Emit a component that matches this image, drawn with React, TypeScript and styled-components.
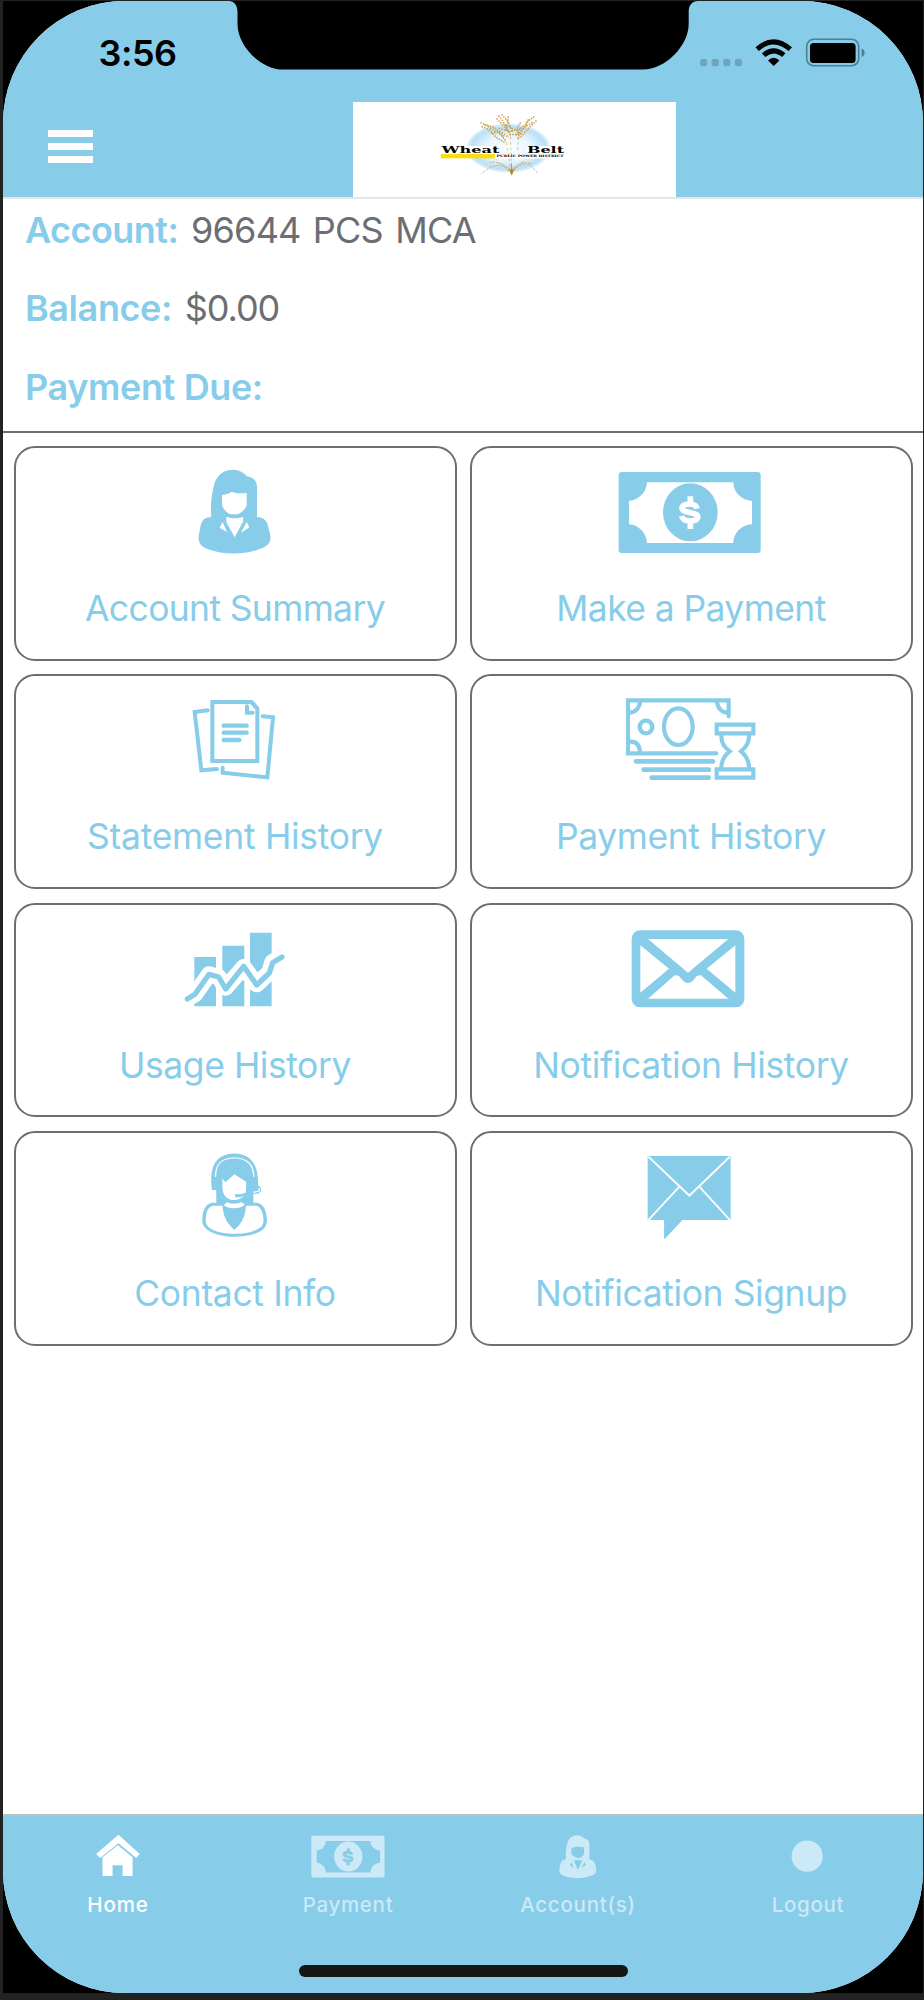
import React from "react";
import styled, { createGlobalStyle } from "styled-components";

const SKY = "#87cdea";
const GREY = "#6b6e73";

const Global = createGlobalStyle`
  html, body { margin: 0; background: #222; }
  body { font-family: Inter, "Liberation Sans", sans-serif; }
  * { box-sizing: border-box; }
  svg { display: block; }
`;

const Bezel = styled.div`
  width: 924px;
  height: 2000px;
  padding: 1px 1px 7px 3px;
  background: #222;
`;

const Corners = styled.div`
  height: 1992px;
  background: #000;
`;

const Screen = styled.div`
  position: relative;
  display: flex;
  flex-direction: column;
  height: 1992px;
  border-radius: 122px;
  overflow: hidden;
  background: #fff;
`;

const NotchShape = styled.svg`
  position: absolute;
  top: 0;
  left: 222px;
`;

const Header = styled.header`
  height: 197.5px;
  background: ${SKY};
  border-bottom: 2px solid #e3e5e6;
`;

const StatusBar = styled.div`
  display: flex;
  justify-content: space-between;
  height: 100.5px;
  padding: 30px 57px 0 95.5px;
`;

const Clock = styled.span`
  font-size: 36px;
  line-height: 44px;
  font-weight: 600;
  letter-spacing: -0.5px;
`;

const NavRow = styled.div`
  display: flex;
  height: 95px;
`;

const MenuButton = styled.button`
  display: flex;
  flex-direction: column;
  gap: 6px;
  width: 349.5px;
  padding: 28px 0 0 45px;
  border: 0;
  background: none;
`;

const MenuLine = styled.span`
  width: 45px;
  height: 7px;
  background: #fff;
`;

const LogoBox = styled.div`
  width: 323.5px;
  height: 95px;
  background: #fff;
`;

const Summary = styled.section`
  display: flex;
  flex-direction: column;
  height: 234.5px;
  padding: 0 22px;
  border-bottom: 2px solid ${GREY};
`;

const SummaryRow = styled.div`
  display: flex;
  gap: 12.7px;
  height: 78.3px;
  flex-shrink: 0;
  padding-top: 9.5px;
  font-size: 36px;
  line-height: 44px;
  white-space: pre;
`;

const Term = styled.span<{ $ls: number }>`
  color: ${SKY};
  font-weight: 600;
  letter-spacing: ${(p) => p.$ls}px;
`;

const Detail = styled.span<{ $ls: number }>`
  color: ${GREY};
  letter-spacing: ${(p) => p.$ls}px;
  word-spacing: 3px;
`;

const Grid = styled.main`
  display: grid;
  grid-template-columns: 443px 443px;
  grid-auto-rows: 214.5px;
  gap: 13.9px 13px;
  padding: 13px 10.5px 0;
  flex: 1;
`;

const Card = styled.button`
  display: flex;
  flex-direction: column;
  align-items: center;
  padding: 9px 0 0;
  border: 2px solid ${GREY};
  border-radius: 21px;
  background: #fff;
  font-family: inherit;
`;

const CardLabel = styled.span<{ $ls: number }>`
  margin-top: 30px;
  color: ${SKY};
  font-size: 35.5px;
  line-height: 44px;
  letter-spacing: ${(p) => p.$ls}px;
  white-space: nowrap;
`;

const TabBar = styled.nav`
  display: grid;
  grid-template-columns: repeat(4, 1fr);
  height: 179px;
  border-top: 2px solid #b5c2c6;
  background: ${SKY};
`;

const Tab = styled.button<{ $active?: boolean }>`
  display: flex;
  flex-direction: column;
  align-items: center;
  padding: 16px 0 0;
  border: 0;
  background: none;
  font-family: inherit;
  color: ${(p) => (p.$active ? "#fff" : "#cbe9f6")};
`;

const TabLabel = styled.span<{ $ls: number }>`
  margin-top: 12px;
  font-size: 20.5px;
  line-height: 26px;
  font-weight: 500;
  letter-spacing: ${(p) => p.$ls}px;
`;

const HomeIndicator = styled.div`
  position: absolute;
  left: 296px;
  top: 1964px;
  width: 329px;
  height: 11.5px;
  border-radius: 6px;
  background: #161616;
`;

const Notch = () => (
  <NotchShape width="480" height="70" viewBox="225 1 480 70">
    <path d="M229 0V1C234 1 237.5 5 237.5 12V24C237.5 46 261 69.6 283 69.6H643C665 69.6 688.7 46 688.7 24V12C688.7 5 692 1 698 1V0Z" fill="#000" />
  </NotchShape>
);

const StatusIcons = () => (
  <svg width="170" height="36" viewBox="696 31 170 36">
    {[700, 711.6, 723.2, 734.8].map((x) => (
      <rect key={x} x={x} y="59" width="7.2" height="7.2" rx="2.2" fill="#6fa5bb" />
    ))}
    <g fill="none" stroke="#000">
      <path d="M757.2 49.2Q773.5 34.4 790.3 49.2" strokeWidth="5" />
      <path d="M763.6 55.2Q773.5 46.4 783.8 55.2" strokeWidth="5" />
    </g>
    <path d="M768 60.5Q773.7 55 779.4 60.5L773.7 66Z" fill="#000" />
    <rect x="806.7" y="39.3" width="52" height="26.4" rx="7" fill="none" stroke="#4f7f94" strokeWidth="1.6" />
    <rect x="810" y="43" width="45.6" height="20" rx="3.5" fill="#000" />
    <path d="M861.6 48.5Q864.6 49.6 864.6 52.8T861.6 57Z" fill="#4f7f94" />
  </svg>
);

const Logo = () => (
  <svg width="323.5" height="94.5" viewBox="352.5 101.5 323.5 94.5">
    <defs>
      <radialGradient id="halo">
        <stop offset="0" stopColor="#fff" />
        <stop offset=".55" stopColor="#e6f4fd" />
        <stop offset=".88" stopColor="#b9e0f8" />
        <stop offset="1" stopColor="#e8f5fd" />
      </radialGradient>
    </defs>
    <ellipse cx="508" cy="147.5" rx="42" ry="24.5" fill="url(#halo)" />
    <path d="M440 145.5H499V153.5H440ZM526 145.5H565V158H494V153.5H526Z" fill="#fff" />
    <g fill="none" stroke="#c9a14c" strokeDasharray="1.5 1.2" strokeWidth="1.5">
      <path d="M480 122L486 125 492 129 500 134 506 141M481 126L488 129 496 137 504 142M484 124L494 127 503 136M491 133L500 131 508 137" />
      <path d="M498 115L502 120 506 127 510 135M501 114L506 119 509 124 512 132M508 116L507 123 505 130M496 118L503 125 508 131M504 124L516 130" />
      <path d="M534 116L528 120 524 127 519 134M532 122L525 126 520 131 517 139M528 119L525 124 519 129 515 136M536 120L527 129 519 138M520 122L516 129 520 134" />
      <path d="M509 134L516 134 522 133M498 128L510 131 520 128" />
    </g>
    <g fill="none" stroke="#d6b679" strokeWidth=".8" strokeDasharray="3 2.4">
      <path d="M506 142L510 168M510 136L511 168M518 136L517 150" />
    </g>
    <g fill="none" stroke="#cda355" strokeWidth=".8" strokeDasharray="2.6 1.2">
      <path d="M511 173Q502 162 491 166L481 173M511 170Q500 160 489 162M511 173Q519 162 529 164L538 173M511 170Q519 160 532 163M511 174Q506 165 498 163M511 174Q516 164 524 161" />
    </g>
    <path d="M508 167L510.5 170 511 161 512 170 514.5 167 511.2 175Z" fill="#b6841f" />
    <rect x="440.3" y="153.6" width="54" height="4.2" fill="#fd0" />
    <g fontFamily="'DejaVu Serif', serif" fontWeight="700" fontSize="8.8">
      <text x="441" y="152.4" textLength="58" lengthAdjust="spacingAndGlyphs">Wheat</text>
      <text x="526.5" y="152.4" textLength="37" lengthAdjust="spacingAndGlyphs">Belt</text>
    </g>
    <text x="496" y="156.9" fontSize="3" fontWeight="700" fontFamily="'DejaVu Serif', serif" textLength="67" lengthAdjust="spacingAndGlyphs">PUBLIC POWER DISTRICT</text>
  </svg>
);

const Person = () => (
  <path fill="currentColor" d="M184 200C180 160 186 126 194 98C204 72 224 59 250 59C268 60 282 67 291 79C310 82 321 92 321 112V201C342 203 352 212 355 232L361 256C363 276 355 286 338 294C285 316 222 315 174 298C154 290 144 280 146 258L152 226C157 208 165 203 184 200Z" />
);

const CARD_BOX = { width: 180, height: 100 };

const AccountIcon = () => (
  <svg {...CARD_BOX} viewBox="-15 21 540 300" color={SKY}>
    <Person />
    <path fill="#fff" d="M216 135C228 133 238 130 245 125C258 130 274 131 290 128V167C284 180 272 190 262 193H243C230 190 219 176 216 165ZM230 200C246 206 264 206 279 200C280 214 280 216 275 222L254 262L232 222C228 213 228 210 230 200ZM218 216L231 246L209 233ZM290 216L298 232L273 248Z" />
  </svg>
);

const BillArt = ({ ink, paper }: { ink: string; paper: string }) => (
  <>
    <rect x="57" y="66" width="426" height="243" rx="10" fill={ink} />
    <path fill={paper} d="M142 97H401C401 127 425 151 457 153V223C425 225 401 249 401 279H142C141 250 118 225 88 223V153C119 150 141 126 142 97Z" />
    <ellipse cx="272" cy="187" rx="82" ry="87" fill={ink} />
    <path fill="none" stroke={paper} strokeWidth="17" d="M292 176C290 165 284 162 270 162C253 162 246 168 247 175C249 184 260 185 272 188C287 191 295 193 294 202C293 210 285 213 270 213C253 212 248 208 246 198M272 139V163M272 211V237" />
  </>
);

const BillIcon = () => (
  <svg {...CARD_BOX} viewBox="4 21 540 300"><BillArt ink={SKY} paper="#fff" /></svg>
);

const PagesIcon = () => (
  <svg {...CARD_BOX} viewBox="-45 16 540 300" fill="none" stroke={SKY} strokeWidth="12" strokeLinecap="round">
    <path d="M157 67H274L292 88V244H157Z" />
    <path d="M261 80V99H278M277 69L291 86" />
    <path d="M191 138H260M191 159H260M191 181H238" strokeWidth="13" />
    <path d="M143 92L104 97L124 272L171 268M308 110L339 113L322 293L188 279V264" strokeLinejoin="miter" />
  </svg>
);

const HourglassIcon = () => (
  <svg {...CARD_BOX} viewBox="4 16 540 300" fill="none" stroke={SKY} strokeWidth="12.5" strokeLinecap="round">
    <path d="M387 110V62H85V221H350" />
    <path d="M121 65C121 83 108 98 90 99M352 66C354 86 366 98 384 99M89 186C110 184 119 196 121 215" />
    <circle cx="139" cy="142" r="19" strokeWidth="13" />
    <ellipse cx="236" cy="141" rx="43" ry="55" />
    <path d="M109 245H340M132 270H328M156 294H327" strokeWidth="14" />
    <path d="M351 135H461V161H351ZM351 269H461V294H351Z" strokeLinecap="butt" />
    <path d="M365 169C366 193 374 202 390 215C374 227 366 239 365 263M448 169C447 193 439 202 424 215C439 227 447 239 448 263" />
  </svg>
);

const ChartIcon = () => (
  <svg {...CARD_BOX} viewBox="-45 11 540 300">
    <path fill={SKY} d="M103 140H168V288H103ZM187 106H253V288H187ZM270 67H335V288H270Z" />
    <path fill="none" stroke="#fff" strokeWidth="48" strokeLinejoin="round" strokeLinecap="round" d="M82 266L105 252L147 192L176 200L197 232L251 170L290 222L328 186L337 155L366 139" />
    <path fill="none" stroke={SKY} strokeWidth="16" strokeLinecap="round" strokeLinejoin="round" d="M82 266L105 252L147 192L176 200L197 236L251 168L290 224L328 188L338 157L366 140" />
  </svg>
);

const EnvelopeIcon = () => (
  <svg {...CARD_BOX} viewBox="4 11 540 300">
    <rect x="96" y="60" width="338" height="231" rx="25" fill={SKY} />
    <path fill="#fff" d="M145 86H386L265 187ZM122 105L208 175L122 247ZM407 105L321 175L407 247ZM145 265L226 194L238 197L250 211C260 220 269 220 280 211L291 197L303 194L386 265Z" />
  </svg>
);

const AgentIcon = () => (
  <svg {...CARD_BOX} viewBox="0 0 180 100">
    <g transform="translate(15 -12) scale(.3827 .3333)">
      <path fill={SKY} d="M147 222V180H136C131 145 133 105 154 85C176 66 213 66 235 86C252 105 257 130 256 165L264 174V184L256 191H244V220Z" />
      <path fill="none" stroke="#fff" strokeWidth="3.5" d="M145 140C145 104 158 84 195 84C230 84 245 108 245 140M244 187L259 183V174" />
      <path fill="#fff" d="M163 145L171 157L194 133L225 155V178C225 197 210 210 194 210C176 210 164 197 163 173Z" />
      <path fill={SKY} d="M195 193H210L221 188L223 195L210 202H197Z" />
      <path fill="#fff" stroke={SKY} strokeWidth="9" d="M165 223H137C121 227 115 248 115 270C113 296 142 309 171 314C190 317 214 317 238 310C263 302 275 292 275 270C274 248 269 227 253 223H225C212 237 177 237 165 223Z" />
      <path fill={SKY} d="M163 222C176 232 213 232 225 222C224 257 214 282 194 299C175 281 164 257 163 222Z" />
      <path fill="none" stroke="#fff" strokeWidth="13" d="M171 221C182 231 205 231 217 221" />
    </g>
  </svg>
);

const SignupIcon = () => (
  <svg {...CARD_BOX} viewBox="0 0 180 100">
    <g transform="translate(-441.3 -12) scale(.3827 .3333)">
      <path fill={SKY} d="M1275 78H1492V270H1366L1320 326H1318V270H1275Z" />
      <path fill="none" stroke="#fff" strokeWidth="5" d="M1277 80L1384 197L1490 80M1357 171L1277 270M1411 171L1490 270" />
    </g>
  </svg>
);

const TAB_BOX = { width: 80, height: 48, viewBox: "0 0 80 48" };

const HomeTabIcon = () => (
  <svg {...TAB_BOX}>
    <g transform="translate(-78 -32) scale(.5893 .3333)">
      <path fill="currentColor" d="M201 104L237 162L231 174L201 130L170 174L163 162Z" />
      <path fill="currentColor" d="M200 136L225 172V228H208V196H191V228H174V172Z" />
    </g>
  </svg>
);

const PaymentTabIcon = () => (
  <svg {...TAB_BOX}>
    <g transform="translate(-6.5 -7.6) scale(.172)">
      <BillArt ink="#cbe9f6" paper={SKY} />
    </g>
  </svg>
);

const AccountTabIcon = () => (
  <svg {...TAB_BOX}>
    <g transform="translate(-3.5 -6.9) scale(.171)">
      <Person />
      <path fill={SKY} d="M216 135L245 125L290 130V167C284 182 270 193 253 193C235 190 219 176 216 165ZM230 205H279L254 262ZM214 216L231 250L207 236ZM292 216L300 234L275 250Z" />
    </g>
  </svg>
);

const LogoutTabIcon = () => (
  <svg {...TAB_BOX}><circle cx="39.2" cy="24.2" r="15.6" fill="currentColor" /></svg>
);

const summary = [
  { term: "Account:", spacing: -0.55, detail: "96644 PCS MCA", detailSpacing: -0.8 },
  { term: "Balance:", spacing: -0.4, detail: "$0.00", detailSpacing: -1.06 },
  { term: "Payment Due:", spacing: -0.38, detail: "", detailSpacing: 0 },
];

const cards = [
  { label: "Account Summary", Icon: AccountIcon, spacing: -0.65 },
  { label: "Make a Payment", Icon: BillIcon, spacing: -0.6 },
  { label: "Statement History", Icon: PagesIcon, spacing: -0.3 },
  { label: "Payment History", Icon: HourglassIcon, spacing: -0.45 },
  { label: "Usage History", Icon: ChartIcon, spacing: -0.45 },
  { label: "Notification History", Icon: EnvelopeIcon, spacing: -0.38 },
  { label: "Contact Info", Icon: AgentIcon, spacing: -0.35 },
  { label: "Notification Signup", Icon: SignupIcon, spacing: -0.4 },
];

const tabs = [
  { label: "Home", Icon: HomeTabIcon, spacing: 0.9 },
  { label: "Payment", Icon: PaymentTabIcon, spacing: 0.7 },
  { label: "Account(s)", Icon: AccountTabIcon, spacing: 0.75 },
  { label: "Logout", Icon: LogoutTabIcon, spacing: 0.7 },
];

export default function App() {
  return (
    <Bezel>
      <Global />
      <Corners>
        <Screen>
          <Header>
            <StatusBar>
              <Clock>3:56</Clock>
              <StatusIcons />
            </StatusBar>
            <NavRow>
              <MenuButton aria-label="Menu">
                <MenuLine /><MenuLine /><MenuLine />
              </MenuButton>
              <LogoBox><Logo /></LogoBox>
            </NavRow>
          </Header>
          <Summary>
            {summary.map((row) => (
              <SummaryRow key={row.term}>
                <Term $ls={row.spacing}>{row.term}</Term>
                <Detail $ls={row.detailSpacing}>{row.detail}</Detail>
              </SummaryRow>
            ))}
          </Summary>
          <Grid>
            {cards.map(({ label, Icon, spacing }) => (
              <Card key={label}>
                <Icon />
                <CardLabel $ls={spacing}>{label}</CardLabel>
              </Card>
            ))}
          </Grid>
          <TabBar>
            {tabs.map(({ label, Icon, spacing }, i) => (
              <Tab key={label} $active={i === 0}>
                <Icon />
                <TabLabel $ls={spacing}>{label}</TabLabel>
              </Tab>
            ))}
          </TabBar>
          <Notch />
          <HomeIndicator />
        </Screen>
      </Corners>
    </Bezel>
  );
}
